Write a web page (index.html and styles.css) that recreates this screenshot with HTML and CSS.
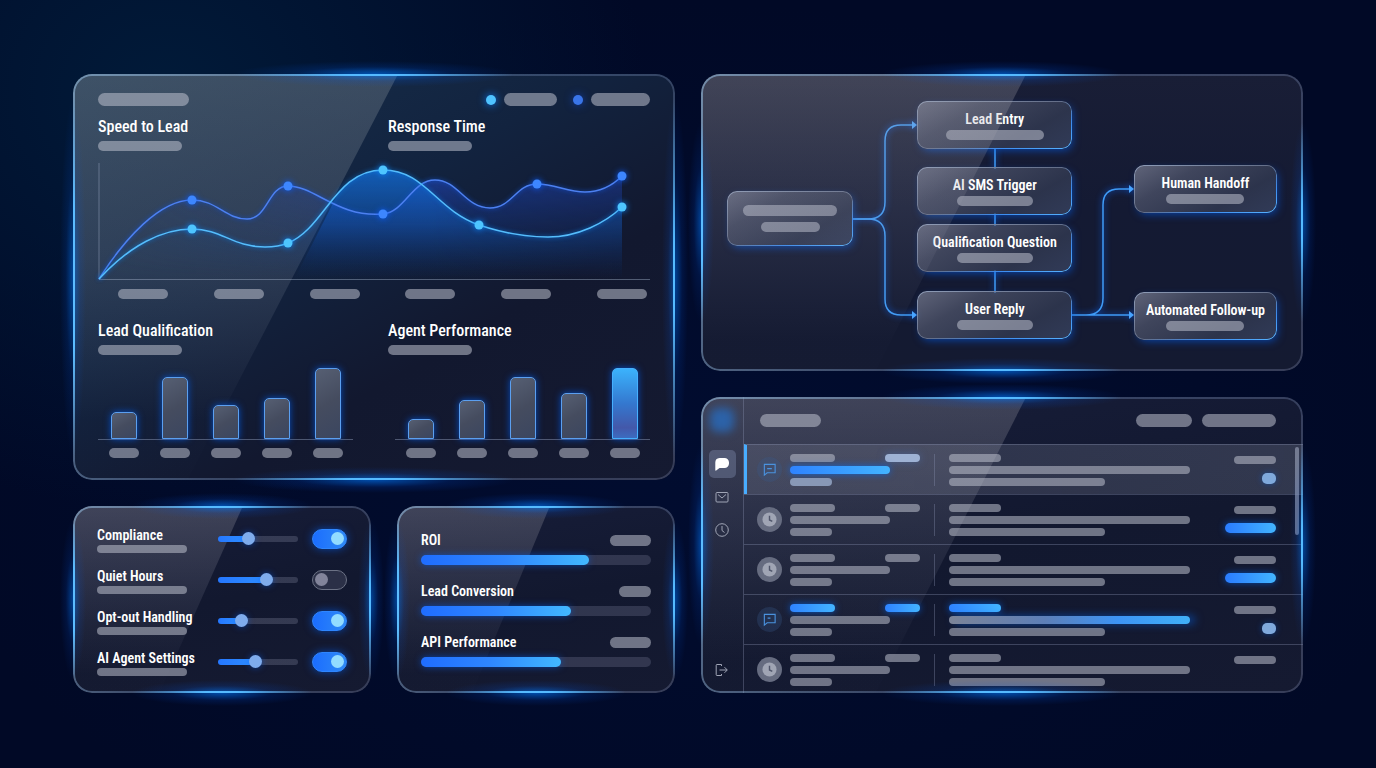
FILE: index.html
```html
<!DOCTYPE html>
<html lang="en">
<head>
  <meta charset="UTF-8">
  <meta name="viewport" content="width=device-width, initial-scale=1.0">
  <title>Lead Dashboard</title>
  <link rel="stylesheet" href="styles.css">
</head>
<body>
  <main class="dashboard">
    <div class="column">

      <!-- Analytics -->
      <section class="panel analytics">
        <div class="sheen"></div>
        <header class="analytics-header">
          <span class="pill w91 tall"></span>
          <div class="legend">
            <span class="dot light"></span><span class="pill w53 tall"></span>
            <span class="dot blue"></span><span class="pill w59 tall"></span>
          </div>
        </header>
        <div class="split">
          <div><h2>Speed to Lead</h2><span class="pill w83"></span></div>
          <div><h2>Response Time</h2><span class="pill w83"></span></div>
        </div>

        <svg class="line-chart" viewBox="98 162 552 119" aria-hidden="true">
          <defs>
            <linearGradient id="fillLight" x1="0" y1="0" x2="0" y2="1">
              <stop offset="0" stop-color="#1371e0" stop-opacity=".75"/>
              <stop offset=".5" stop-color="#1259b8" stop-opacity=".5"/>
              <stop offset="1" stop-color="#0c3b80" stop-opacity="0"/>
            </linearGradient>
            <linearGradient id="fillBlue" x1="0" y1="0" x2="0" y2="1">
              <stop offset="0" stop-color="#2149c4" stop-opacity=".6"/>
              <stop offset="1" stop-color="#12306e" stop-opacity="0"/>
            </linearGradient>
            <linearGradient id="across" x1="0" y1="0" x2="1" y2="0">
              <stop offset="0" stop-color="#fff" stop-opacity=".1"/>
              <stop offset=".4" stop-color="#fff"/>
              <stop offset=".6" stop-color="#fff"/>
              <stop offset="1" stop-color="#fff" stop-opacity=".7"/>
            </linearGradient>
            <mask id="fade" maskUnits="userSpaceOnUse" x="98" y="160" width="552" height="120">
              <rect x="98" y="160" width="552" height="120" fill="url(#across)"/>
              <polygon points="98,160 355,160 294,280 98,280" fill="#000" opacity=".5"/>
            </mask>
          </defs>
          <g mask="url(#fade)">
            <path fill="url(#fillBlue)" d="M99 279C125 238 160 200 192 200C217 200 225 219 247 219C268 219 268 186 288 186C315 186 338 218 383 214C405 212 412 180 435 180C458 180 465 208 490 208C512 208 516 184 537 184C555 184 567 192 585 192C600 192 612 186 622 176V279Z"/>
            <path fill="url(#fillLight)" d="M99 279C130 245 163 229 192 229C222 229 232 247 265 247C273 247 281 246 288 243C325 228 335 170 383 170C425 170 436 210 479 225C500 232 526 237 548 237C578 237 605 223 622 207V279Z"/>
          </g>
          <path class="axis" d="M99 163V279.500H650"/>
          <path class="line blue" d="M99 279C125 238 160 200 192 200C217 200 225 219 247 219C268 219 268 186 288 186C315 186 338 218 383 214C405 212 412 180 435 180C458 180 465 208 490 208C512 208 516 184 537 184C555 184 567 192 585 192C600 192 612 186 622 176"/>
          <path class="line light" d="M99 279C130 245 163 229 192 229C222 229 232 247 265 247C273 247 281 246 288 243C325 228 335 170 383 170C425 170 436 210 479 225C500 232 526 237 548 237C578 237 605 223 622 207"/>
          <g class="points blue">
            <circle cx="192" cy="200" r="4.500"/><circle cx="288" cy="186" r="4.500"/>
            <circle cx="383" cy="214" r="4.500"/><circle cx="537" cy="184" r="4.500"/>
            <circle cx="622" cy="176" r="4.500"/>
          </g>
          <g class="points light">
            <circle cx="192" cy="229" r="4.500"/><circle cx="288" cy="243" r="4.500"/>
            <circle cx="383" cy="170" r="4.500"/><circle cx="479" cy="225" r="4.500"/>
            <circle cx="622" cy="207" r="4.500"/>
          </g>
        </svg>
        <div class="chart-labels">
          <span class="pill"></span><span class="pill"></span><span class="pill"></span>
          <span class="pill"></span><span class="pill"></span><span class="pill"></span>
        </div>

        <div class="split">
          <div>
            <h2>Lead Qualification</h2><span class="pill w83"></span>
            <div class="bar-chart">
              <div class="bar" style="height: 27px"></div>
              <div class="bar" style="height: 62px"></div>
              <div class="bar" style="height: 34px"></div>
              <div class="bar" style="height: 41px"></div>
              <div class="bar" style="height: 71px"></div>
            </div>
            <div class="bar-labels">
              <span class="pill"></span><span class="pill"></span><span class="pill"></span><span class="pill"></span><span class="pill"></span>
            </div>
          </div>
          <div class="agent">
            <h2>Agent Performance</h2><span class="pill w83"></span>
            <div class="bar-chart">
              <div class="bar" style="height: 20px"></div>
              <div class="bar" style="height: 39px"></div>
              <div class="bar" style="height: 62px"></div>
              <div class="bar" style="height: 46px"></div>
              <div class="bar active" style="height: 71px"></div>
            </div>
            <div class="bar-labels">
              <span class="pill"></span><span class="pill"></span><span class="pill"></span><span class="pill"></span><span class="pill"></span>
            </div>
          </div>
        </div>
      </section>

      <div class="bottom-row">
        <!-- Settings -->
        <section class="panel settings">
          <div class="sheen"></div>
          <div class="setting">
            <label for="compliance">Compliance<span class="pill"></span></label>
            <input type="range" value="36" style="--value: 36%" aria-label="Compliance level">
            <input type="checkbox" id="compliance" checked>
          </div>
          <div class="setting">
            <label for="quiet">Quiet Hours<span class="pill"></span></label>
            <input type="range" value="63" style="--value: 63%" aria-label="Quiet hours level">
            <input type="checkbox" id="quiet">
          </div>
          <div class="setting">
            <label for="optout">Opt-out Handling<span class="pill"></span></label>
            <input type="range" value="25" style="--value: 25%" aria-label="Opt-out level">
            <input type="checkbox" id="optout" checked>
          </div>
          <div class="setting">
            <label for="agent">AI Agent Settings<span class="pill"></span></label>
            <input type="range" value="47" style="--value: 47%" aria-label="AI agent level">
            <input type="checkbox" id="agent" checked>
          </div>
        </section>

        <!-- Metrics -->
        <section class="panel metrics">
          <div class="sheen"></div>
          <div class="metric">
            <h3>ROI</h3><span class="pill w41"></span>
            <div class="track"><div class="fill" style="width: 73%"></div></div>
          </div>
          <div class="metric">
            <h3>Lead Conversion</h3><span class="pill w32"></span>
            <div class="track"><div class="fill" style="width: 65%"></div></div>
          </div>
          <div class="metric">
            <h3>API Performance</h3><span class="pill w41"></span>
            <div class="track"><div class="fill" style="width: 61%"></div></div>
          </div>
        </section>
      </div>
    </div>

    <div class="column">
      <!-- Workflow -->
      <section class="panel flow">
        <svg class="links" viewBox="0 0 602 297" preserveAspectRatio="none" aria-hidden="true">
          <path d="M152 145H167Q184 145 184 128V67Q184 51 200 51H212"/>
          <path d="M152 145H167Q184 145 184 162V225Q184 241 200 241H212"/>
          <path d="M294 74V95M294 139V152M294 196V219"/>
          <path d="M371 241H429M385 241Q402 241 402 224V131Q402 115 418 115H429"/>
          <path class="arrow" d="M211 47L216 51L211 55ZM211 237L216 241L211 245ZM428 111L433 115L428 119ZM428 237L433 241L428 245Z"/>
        </svg>
        <div class="node start"><span class="pill w94"></span><span class="pill w59"></span></div>
        <div class="node lead-entry"><h3>Lead Entry</h3><span class="pill w98"></span></div>
        <div class="node sms-trigger"><h3>AI SMS Trigger</h3><span class="pill w76"></span></div>
        <div class="node question"><h3>Qualification Question</h3><span class="pill w76"></span></div>
        <div class="node user-reply"><h3>User Reply</h3><span class="pill w76"></span></div>
        <div class="node handoff"><h3>Human Handoff</h3><span class="pill w78"></span></div>
        <div class="node follow-up"><h3>Automated Follow-up</h3><span class="pill w78"></span></div>
        <div class="sheen"></div>
      </section>

      <!-- Inbox -->
      <section class="panel inbox">
        <div class="sheen"></div>
        <nav class="sidebar">
          <span class="logo"></span>
          <button class="nav-button active" aria-label="Chats">
            <svg viewBox="0 0 16 16"><path fill="#fff" d="M5.500 2H10.500A4.500 4.500 0 0 1 15 6.500V7.500A4.500 4.500 0 0 1 10.500 12H5.500L2.200 14.500Q1.300 15 1.300 14V6.500A4.500 4.500 0 0 1 5.500 2Z"/></svg>
          </button>
          <button class="nav-button" aria-label="Mail">
            <svg viewBox="0 0 16 16"><rect x="2" y="3.500" width="12" height="9.500" rx="1"/><path d="M4 5.500L8 9L12 5.500"/></svg>
          </button>
          <button class="nav-button" aria-label="History">
            <svg viewBox="0 0 16 16"><circle cx="8" cy="8" r="6.300"/><path d="M8 4V8.500L10.500 10.500"/></svg>
          </button>
          <button class="nav-button logout" aria-label="Log out">
            <svg viewBox="0 0 16 16"><path d="M7.500 4V2.500H3Q2.200 2.500 2.200 3.300V12.700Q2.200 13.500 3 13.500H7.500V12M5.500 8H13M10.500 5.200L13.300 8L10.500 10.800"/></svg>
          </button>
        </nav>
        <div class="messages">
          <header class="inbox-header">
            <span class="pill tall w61"></span>
            <span class="pill tall w56"></span>
            <span class="pill tall w74"></span>
          </header>
          <ul class="message-list">
            <li class="message selected">
              <span class="avatar chat"><svg viewBox="0 0 16 16"><path d="M2 2.500H14V11.500H5.500L2.500 14V2.500M5.500 7H10.500"/></svg></span>
              <div class="contact">
                <span class="pill w45"></span><span class="pill w35 pale"></span>
                <span class="pill w100 bright"></span><span class="pill w42 pale-dim"></span>
              </div>
              <div class="preview"><span class="pill w52"></span><span class="pill w241"></span><span class="pill w156"></span></div>
              <div class="meta"><span class="pill w42"></span><span class="unread"></span></div>
            </li>
            <li class="message">
              <span class="avatar"><svg viewBox="0 0 16 16"><circle cx="8" cy="8" r="7.500"/><path d="M8 4V8.500L11 10"/></svg></span>
              <div class="contact">
                <span class="pill w45"></span><span class="pill w35"></span>
                <span class="pill w100"></span><span class="pill w42"></span>
              </div>
              <div class="preview"><span class="pill w52"></span><span class="pill w241"></span><span class="pill w156"></span></div>
              <div class="meta"><span class="pill w42"></span><span class="tag"></span></div>
            </li>
            <li class="message">
              <span class="avatar"><svg viewBox="0 0 16 16"><circle cx="8" cy="8" r="7.500"/><path d="M8 4V8.500L11 10"/></svg></span>
              <div class="contact">
                <span class="pill w45"></span><span class="pill w35"></span>
                <span class="pill w100"></span><span class="pill w42"></span>
              </div>
              <div class="preview"><span class="pill w52"></span><span class="pill w241"></span><span class="pill w156"></span></div>
              <div class="meta"><span class="pill w42"></span><span class="tag"></span></div>
            </li>
            <li class="message">
              <span class="avatar chat"><svg viewBox="0 0 16 16"><path d="M2 2.500H14V11.500H5.500L2.500 14V2.500M6 6.500H9"/></svg></span>
              <div class="contact">
                <span class="pill w45 bright"></span><span class="pill w35 bright"></span>
                <span class="pill w100"></span><span class="pill w42"></span>
              </div>
              <div class="preview"><span class="pill w52 bright"></span><span class="pill w241 ramp"></span><span class="pill w156"></span></div>
              <div class="meta"><span class="pill w42"></span><span class="unread"></span></div>
            </li>
            <li class="message">
              <span class="avatar"><svg viewBox="0 0 16 16"><circle cx="8" cy="8" r="7.500"/><path d="M8 4V8.500L11 10"/></svg></span>
              <div class="contact">
                <span class="pill w45"></span><span class="pill w35"></span>
                <span class="pill w100"></span><span class="pill w42"></span>
              </div>
              <div class="preview"><span class="pill w52"></span><span class="pill w241"></span><span class="pill w156"></span></div>
              <div class="meta"><span class="pill w42"></span></div>
            </li>
          </ul>
          <span class="scrollbar"></span>
        </div>
      </section>
    </div>
  </main>
</body>
</html>
```
FILE: styles.css
```css
* {
  box-sizing: border-box;
}
body {
  margin: 0;
  min-height: 100vh;
  font-family: "Roboto Condensed", Roboto, "Liberation Sans", sans-serif;
  color: #fff;
  background:
    radial-gradient(ellipse 480px 420px at 12% 12%, rgba(0, 44, 76, 0.5), rgba(0, 44, 76, 0)),
    radial-gradient(ellipse 760px 460px at 50% 60%, rgba(0, 20, 70, 0.3), rgba(0, 20, 70, 0)),
    #010926;
}
h2, h3 {
  margin: 0;
  white-space: nowrap;
}
h2 {
  font-size: 16px;
  font-weight: 500;
  line-height: 20px;
}
h3 {
  font-size: 14px;
  font-weight: 600;
  line-height: 18px;
}

.dashboard {
  display: grid;
  grid-template-columns: 1fr 1fr;
  gap: 26px;
  padding: 74px 73px;
}
.column {
  display: flex;
  flex-direction: column;
  gap: 26px;
  min-width: 0;
}
.bottom-row {
  display: grid;
  grid-template-columns: 298fr 278fr;
  gap: 26px;
  flex: 1;
}

/* Glass panel */
.panel {
  --reach: 120px;
  --side: 100px;
  --sheen-top: 54%;
  --sheen-bottom: 29%;
  position: relative;
  border-radius: 19px;
  background: linear-gradient(170deg, #171d39, #12182f 50%, #151a31);
}
.panel > * {
  position: relative;
}
/* edge line, brighter in the middle of each side */
.panel::before {
  content: "";
  position: absolute;
  inset: 0;
  z-index: 2;
  padding: 2px;
  border-radius: 19px;
  pointer-events: none;
  background:
    radial-gradient(ellipse var(--reach) 12px at 50% 0, #55baff 20%, rgba(60, 140, 255, 0)),
    radial-gradient(ellipse var(--reach) 12px at 50% 100%, #55baff 20%, rgba(60, 140, 255, 0)),
    radial-gradient(ellipse 12px var(--side) at 0 50%, #5cbcff 40%, rgba(60, 140, 255, 0)),
    radial-gradient(ellipse 12px var(--side) at 100% 50%, #55baff 20%, rgba(60, 140, 255, 0)),
    linear-gradient(120deg, rgba(150, 190, 225, 0.6), rgba(120, 145, 190, 0.35) 50%, rgba(120, 130, 165, 0.35));
  mask: linear-gradient(#000 0 0) content-box exclude, linear-gradient(#000 0 0);
}
/* light spilling from the edges */
.panel::after {
  content: "";
  position: absolute;
  inset: -20px;
  pointer-events: none;
  background:
    radial-gradient(ellipse var(--reach) 13px at 50% 20px, rgba(0, 120, 255, 0.6), rgba(0, 90, 240, 0.15) 55%, rgba(0, 90, 240, 0)),
    radial-gradient(ellipse var(--reach) 13px at 50% calc(100% - 20px), rgba(0, 120, 255, 0.6), rgba(0, 90, 240, 0.15) 55%, rgba(0, 90, 240, 0)),
    radial-gradient(ellipse 13px var(--side) at 20px 50%, rgba(0, 120, 255, 0.5), rgba(0, 90, 240, 0.12) 55%, rgba(0, 90, 240, 0)),
    radial-gradient(ellipse 13px var(--side) at calc(100% - 20px) 50%, rgba(0, 120, 255, 0.5), rgba(0, 90, 240, 0.12) 55%, rgba(0, 90, 240, 0));
}
.panel > .sheen {
  position: absolute;
  inset: 0;
  border-radius: 19px;
  pointer-events: none;
  clip-path: polygon(0 0, var(--sheen-top) 0, var(--sheen-bottom) 100%, 0 100%);
  background: linear-gradient(rgba(170, 168, 175, 0.28), rgba(150, 152, 170, 0.16) 45%, rgba(110, 120, 160, 0.01) 90%);
}

/* Placeholder lines */
.pill {
  display: block;
  height: 8px;
  max-width: 100%;
  border-radius: 7px;
  background: rgba(190, 194, 207, 0.54);
}
.pill.tall { height: 13px; }
.w32 { width: 32px; }
.w35 { width: 35px; }
.w41 { width: 41px; }
.w42 { width: 42px; }
.w45 { width: 45px; }
.w52 { width: 52px; }
.w53 { width: 53px; }
.w56 { width: 56px; }
.w59 { width: 59px; }
.w61 { width: 61px; }
.w74 { width: 74px; }
.w76 { width: 76px; }
.w78 { width: 78px; }
.w83 { width: 84px; }
.w91 { width: 91px; }
.w94 { width: 94px; }
.w98 { width: 98px; }
.w100 { width: 100px; }
.w156 { width: 156px; }
.w241 { width: 241px; }
.bright {
  background: linear-gradient(90deg, #2e83ff, #43b4ff);
  box-shadow: 0 0 7px rgba(0, 110, 255, 0.7);
}
.pale { background: #9eb2d4; box-shadow: 0 0 8px rgba(80, 130, 210, 0.4); }
.pale-dim { background: #8898b6; }
.ramp {
  background: linear-gradient(90deg, #7c8498, #5d7fb8 40%, #3d94f5 70%, #40b0f8);
  box-shadow: 5px 0 8px rgba(0, 110, 255, 0.5);
}

/* Analytics */
.analytics {
  --reach: 140px;
  --side: 180px;
  --sheen-bottom: 19%;
  padding: 19px 25px 22px;
  background: linear-gradient(150deg, #18304c, #12233f 40%, #12182f 65%, #151a31);
}
.analytics > .sheen {
  background: linear-gradient(rgba(150, 160, 165, 0.3), rgba(140, 150, 165, 0.22) 45%, rgba(110, 120, 160, 0.01) 85%);
}
.analytics-header {
  display: flex;
  justify-content: space-between;
  align-items: center;
  margin-bottom: 11px;
}
.legend {
  display: flex;
  align-items: center;
  gap: 8px;
}
.dot {
  width: 10px;
  height: 10px;
  border-radius: 50%;
}
.dot.light { background: #4fc3ff; box-shadow: 0 0 8px #0a7cff; }
.dot.blue { background: #3a75e8; margin-left: 8px; box-shadow: 0 0 8px #123fae; }
.split {
  display: grid;
  grid-template-columns: 290fr 262fr;
}
.split .w83 {
  height: 10px;
  margin-top: 4px;
}
.line-chart {
  display: block;
  width: 100%;
  margin-top: 11px;
  overflow: visible;
}
.axis { fill: none; stroke: rgba(160, 175, 200, 0.45); }
.line { fill: none; stroke-width: 1.5; }
.line.blue { stroke: #4d80f0; filter: drop-shadow(0 0 2px #1050d0); }
.line.light { stroke: #55bdfc; filter: drop-shadow(0 0 2px #0878e0); }
.points.blue { fill: #3d86ff; filter: drop-shadow(0 0 3px #0a5cff); }
.points.light { fill: #4ec5ff; filter: drop-shadow(0 0 3px #0a86ff); }
.chart-labels {
  display: flex;
  justify-content: space-between;
  padding: 0 3px 0 20px;
  margin: 8px 0 22px;
}
.chart-labels .pill {
  width: 50px;
  height: 10px;
}
.bar-chart, .bar-labels {
  display: grid;
  grid-template-columns: repeat(5, 1fr);
  justify-items: center;
  margin-right: 35px;
}
.bar-chart {
  align-items: end;
  height: 85px;
  border-bottom: 1px solid rgba(150, 165, 195, 0.45);
}
.bar-labels { margin-top: 8px; }
.bar-labels .pill {
  width: 30px;
  height: 10px;
}
.agent .bar-chart, .agent .bar-labels {
  margin-left: 7px;
  margin-right: 0;
}
.bar {
  width: 26px;
  border: 1px solid #5b9ff0;
  border-radius: 5px 5px 0 0;
  background: linear-gradient(150deg, #565f73, #454c5f 50%, #3b4660);
  box-shadow: 0 0 7px rgba(0, 95, 240, 0.75);
}
.bar.active {
  border-color: #45b0ff;
  background: linear-gradient(#3bb2fc, #3478cf 50%, #4358aa 85%, #3c6cc0);
}

/* Settings */
.settings {
  padding: 12px 24px 11px;
  --reach: 90px;
  --side: 80px;
  --sheen-top: 57%;
}
.setting {
  display: grid;
  grid-template-columns: 1fr 80px 35px;
  column-gap: 14px;
  align-items: center;
  height: 41px;
}
.setting label {
  font-size: 14px;
  line-height: 20px;
  font-weight: 600;
  white-space: nowrap;
}
.setting .pill { width: 90px; }
.setting input {
  appearance: none;
  margin: 0;
}
.setting input[type="range"] {
  width: 100%;
  height: 13px;
  background: transparent;
}
.setting input[type="range"]::-webkit-slider-runnable-track {
  height: 6px;
  border-radius: 3px;
  background: linear-gradient(90deg, #2577ff, #2f8fff var(--value), rgba(140, 145, 170, 0.28) var(--value));
}
.setting input[type="range"]::-webkit-slider-thumb {
  appearance: none;
  width: 13px;
  height: 13px;
  margin-top: -4px;
  border-radius: 50%;
  background: #7facec;
  box-shadow: 0 0 6px rgba(0, 100, 255, 0.5);
}
.setting input[type="checkbox"] {
  display: flex;
  align-items: center;
  width: 35px;
  height: 20px;
  padding: 0 2px;
  border: 1px solid #6c7285;
  border-radius: 10px;
  background: #2b3047;
}
.setting input[type="checkbox"]::before {
  content: "";
  width: 13px;
  height: 13px;
  border-radius: 50%;
  background: #82849a;
}
.setting input[type="checkbox"]:checked {
  justify-content: flex-end;
  border-color: #2e86ff;
  background: linear-gradient(90deg, #1b6dff, #2f8af5);
  box-shadow: 0 0 8px rgba(0, 100, 255, 0.6);
}
.setting input[type="checkbox"]:checked::before { background: #93dcff; }

/* Metrics */
.metrics {
  display: flex;
  flex-direction: column;
  gap: 17px;
  padding: 25px 24px 24px;
  --reach: 90px;
  --side: 80px;
  --sheen-top: 55%;
  --sheen-bottom: 27%;
}
.metric {
  display: grid;
  grid-template-columns: 1fr auto;
  align-items: center;
  row-gap: 6px;
}
.metric .pill { height: 11px; }
.track {
  grid-column: 1 / -1;
  height: 10px;
  border-radius: 5px;
  background: rgba(140, 145, 170, 0.25);
}
.fill {
  height: 100%;
  border-radius: 5px;
  background: linear-gradient(90deg, #1f6dff, #2f87ff 50%, #42b8ff);
  box-shadow: 0 0 7px rgba(0, 100, 255, 0.55);
}

/* Workflow */
.flow {
  aspect-ratio: 602 / 297;
  background: linear-gradient(#191e36, #141a33 45%, #141a31);
}
.links {
  display: block;
  width: 100%;
  height: 100%;
  fill: none;
  stroke: #3f9cf8;
  stroke-width: 1.5;
  filter: drop-shadow(0 0 3px #0a66ff);
}
.links .arrow { fill: #4ba6ff; stroke: none; }
.panel > .node {
  position: absolute;
  left: 35.9%;
  display: flex;
  flex-direction: column;
  align-items: center;
  justify-content: center;
  gap: 2px;
  width: 25.8%;
  height: 16%;
  border-radius: 10px;
  background: linear-gradient(150deg, rgba(142, 146, 166, 0.62), rgba(92, 98, 120, 0.6) 30%, rgba(52, 60, 84, 0.75) 70%, #313b58);
  box-shadow: 2px 3px 8px -2px rgba(0, 100, 255, 0.6);
}
.node::before {
  content: "";
  position: absolute;
  inset: 0;
  padding: 1px;
  border-radius: 10px;
  background: linear-gradient(160deg, #8f9db8, #646e88 50%, #3d8df0 75%, #58b4ff);
  mask: linear-gradient(#000 0 0) content-box exclude, linear-gradient(#000 0 0);
}
.node .pill { height: 10px; }
.panel > .start { left: 4.3%; top: 39.5%; width: 21%; height: 18.4%; gap: 6px; }
.start .w94 { height: 11px; }
.lead-entry { top: 9.2%; }
.sms-trigger { top: 31.4%; }
.question { top: 50.6%; }
.user-reply { top: 73.2%; }
.panel > .handoff { left: 72%; top: 30.8%; width: 23.6%; }
.panel > .follow-up { left: 72%; top: 73.4%; width: 23.6%; }

/* Inbox */
.inbox {
  display: flex;
  flex: 1;
}
.sidebar {
  display: flex;
  flex-direction: column;
  align-items: center;
  gap: 5px;
  width: 43px;
  padding: 11px 0 9px;
  border-right: 1px solid rgba(140, 150, 180, 0.35);
}
.logo {
  width: 24px;
  height: 24px;
  margin-bottom: 13px;
  border-radius: 8px;
  background: #2c62a8;
  filter: blur(4px);
}
.nav-button {
  display: grid;
  place-items: center;
  width: 27px;
  height: 28px;
  padding: 0;
  border: 0;
  border-radius: 5px;
  background: none;
}
.nav-button.active { background: rgba(125, 135, 170, 0.42); }
.nav-button.logout { margin-top: auto; }
.nav-button svg {
  width: 16px;
  height: 16px;
  fill: none;
  stroke: #a0a5b6;
}
.nav-button.active svg { stroke: none; }
.messages {
  position: relative;
  flex: 1;
  min-width: 0;
}
.inbox-header {
  display: flex;
  align-items: center;
  gap: 10px;
  height: 47px;
  padding: 0 27px 0 16px;
}
.inbox-header .w61 { margin-right: auto; }
.message-list {
  margin: 0;
  padding: 0;
  list-style: none;
}
.message {
  display: flex;
  align-items: flex-start;
  height: 50px;
  padding: 9px 27px 0 13px;
  border-top: 1px solid rgba(140, 150, 180, 0.35);
}
.message:last-child { height: 48px; }
.message.selected {
  padding-left: 10px;
  border-left: 3px solid #48adff;
  background: linear-gradient(90deg, rgba(140, 145, 165, 0.2), rgba(140, 145, 165, 0.26));
}
.avatar {
  display: grid;
  place-items: center;
  width: 25px;
  height: 25px;
  margin: 3px 8px 0 0;
  border-radius: 50%;
  background: #666c80;
}
.avatar svg { width: 15px; height: 15px; fill: #a0a5b4; }
.avatar path { fill: none; stroke: #50566b; stroke-width: 1.5; }
.avatar.chat { background: rgba(55, 90, 140, 0.3); }
.avatar.chat path { stroke: #4a92de; stroke-width: 1.2; }
.contact {
  display: grid;
  grid-template-columns: 1fr auto;
  gap: 4px 0;
  width: 130px;
}
.contact .w100, .contact .w42 { grid-column: 1 / -1; }
.preview {
  display: grid;
  flex: 1;
  align-content: start;
  gap: 4px;
  min-width: 0;
  margin-left: 14px;
  padding-left: 14px;
  border-left: 1px solid rgba(140, 150, 180, 0.35);
}
.meta {
  display: flex;
  flex-direction: column;
  align-items: flex-end;
  gap: 9px;
  width: 51px;
  padding-top: 2px;
}
.tag {
  width: 51px;
  height: 10px;
  border-radius: 5px;
  background: linear-gradient(90deg, #2a7cff, #42b4ff);
  box-shadow: 0 0 7px rgba(0, 110, 255, 0.6);
}
.unread {
  width: 14px;
  height: 11px;
  border-radius: 5px;
  background: #7fa9dc;
  box-shadow: 0 0 6px rgba(0, 110, 255, 0.4);
}
/* thumb lies over the list */
.scrollbar {
  position: absolute;
  top: 50px;
  right: 4px;
  width: 4px;
  height: 88px;
  border-radius: 2px;
  background: rgba(150, 158, 182, 0.65);
}
```
